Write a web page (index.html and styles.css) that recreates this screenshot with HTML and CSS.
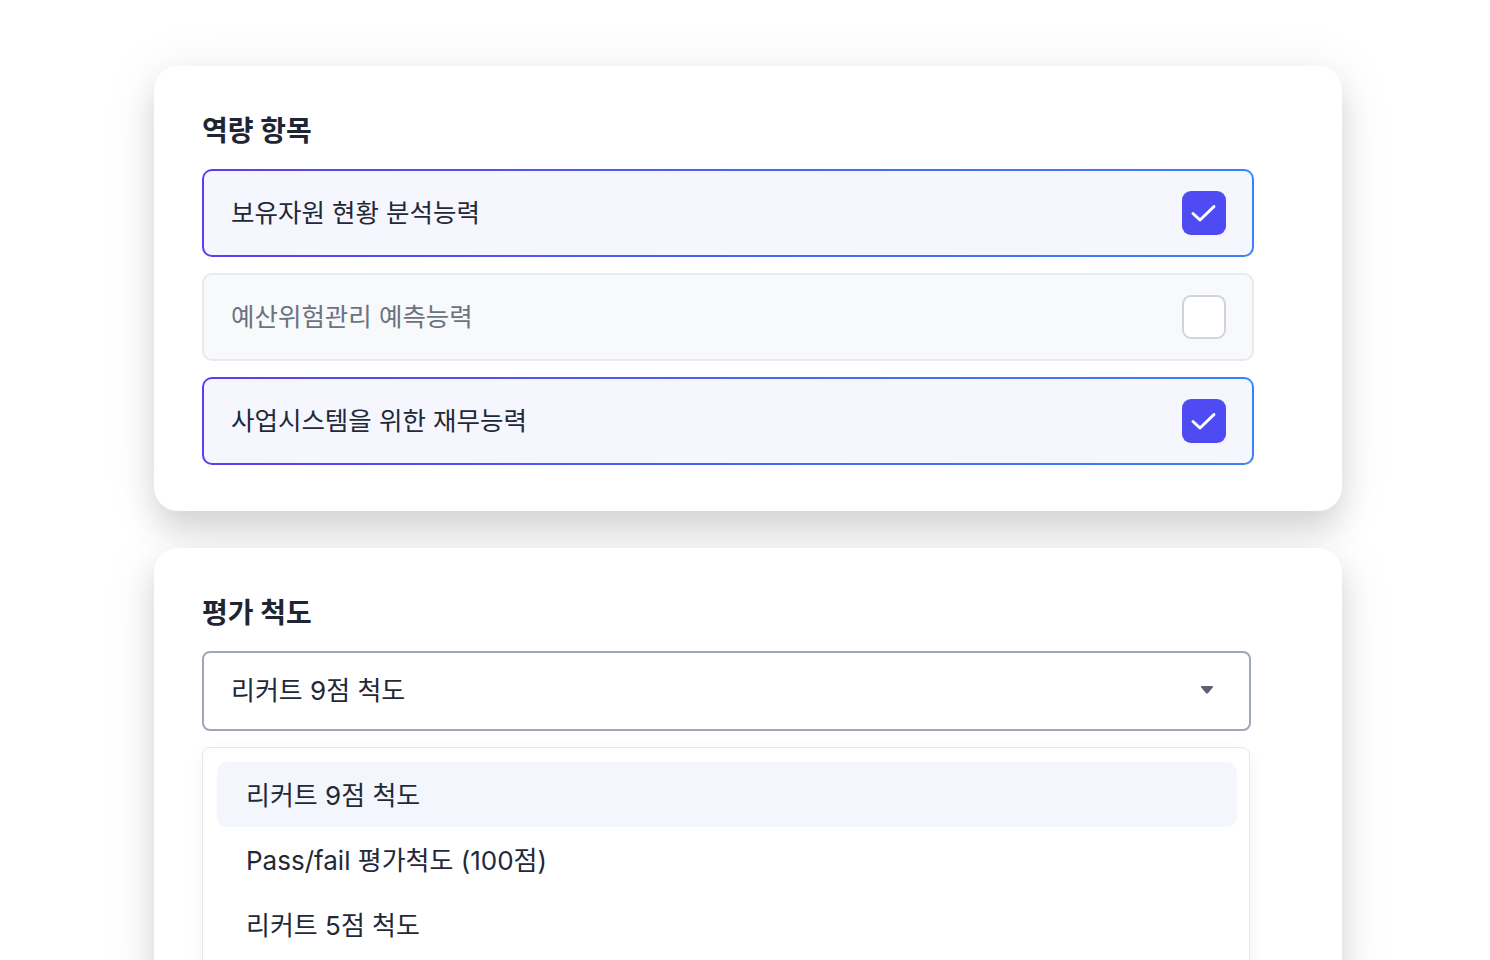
FILE: index.html
```html
<!DOCTYPE html>
<html lang="ko">
<head>
<meta charset="utf-8">
<link rel="stylesheet" href="styles.css">
</head>
<body>
<main class="page">
  <section class="card card-top">
    <h2 class="card-title">역량 항목</h2>
    <div class="items">
      <div class="item item-checked">
        <span class="item-label">보유자원 현황 분석능력</span>
        <span class="box box-checked">
          <svg width="44" height="44" viewBox="0 0 44 44"><polyline points="11,22.5 18,29 32,15.5" fill="none" stroke="#fff" stroke-width="3" stroke-linecap="round" stroke-linejoin="round"/></svg>
        </span>
      </div>
      <div class="item item-unchecked">
        <span class="item-label">예산위험관리 예측능력</span>
        <span class="box box-empty"></span>
      </div>
      <div class="item item-checked">
        <span class="item-label">사업시스템을 위한 재무능력</span>
        <span class="box box-checked">
          <svg width="44" height="44" viewBox="0 0 44 44"><polyline points="11,22.5 18,29 32,15.5" fill="none" stroke="#fff" stroke-width="3" stroke-linecap="round" stroke-linejoin="round"/></svg>
        </span>
      </div>
    </div>
  </section>

  <section class="card card-bottom">
    <h2 class="card-title">평가 척도</h2>
    <div class="select">
      <span class="select-value">리커트 9점 척도</span>
      <svg class="select-arrow" width="14" height="10" viewBox="0 0 14 10"><path d="M2 1 H12 Q13.6 1 12.7 2.4 L8.2 7.9 Q7 9.2 5.8 7.9 L1.3 2.4 Q0.4 1 2 1 Z" fill="#5b6170"/></svg>
    </div>
    <ul class="menu">
      <li class="option option-active">리커트 9점 척도</li>
      <li class="option">Pass/fail 평가척도 (100점)</li>
      <li class="option">리커트 5점 척도</li>
    </ul>
  </section>
</main>
</body>
</html>
```

FILE: styles.css
```css
html, body {
  margin: 0;
  padding: 0;
  background: #ffffff;
  font-family: Inter, "Noto Sans CJK KR", "Noto Sans", sans-serif;
  color: #1f2937;
  overflow: hidden;
}

.page {
  width: 1490px;
  height: 960px;
  box-sizing: border-box;
  padding: 66px 0 0 154px;
  display: flex;
  flex-direction: column;
  gap: 37px;
}

.card {
  width: 1188px;
  box-sizing: border-box;
  background: #ffffff;
  border-radius: 24px;
  padding: 48px 88px 46px 48px;
  box-shadow: 0 18px 30px rgba(0, 0, 0, 0.13), 0 4px 60px rgba(0, 0, 0, 0.07);
  flex-shrink: 0;
}

.card-bottom {
  padding-right: 91px;
  height: 460px;
}

.card-title {
  margin: 0 0 23px 0;
  font-size: 28px;
  line-height: 32px;
  font-weight: 700;
  color: #1f2533;
  position: relative;
  top: 1px;
}

.items {
  display: flex;
  flex-direction: column;
  gap: 16px;
}

.item {
  height: 88px;
  box-sizing: border-box;
  border-radius: 10px;
  display: flex;
  align-items: center;
  justify-content: space-between;
  padding: 0 26px 0 27px;
}

.item-checked {
  border: 2px solid transparent;
  background:
    linear-gradient(#f5f6fe, #f5f6fe) padding-box,
    linear-gradient(90deg, #5b3df2 0%, #4a63f4 50%, #3b82f6 100%) border-box;
}

.item-unchecked {
  border: 2px solid #e8eaef;
  background: #f8f9fb;
}

.item-label {
  font-size: 25.5px;
  line-height: 32px;
  color: #1f2937;
}

.item-unchecked .item-label {
  color: #6b7280;
}

.box {
  width: 44px;
  height: 44px;
  box-sizing: border-box;
  border-radius: 9px;
  display: block;
}

.box svg {
  display: block;
}

.box-checked {
  background: #4f4bf2;
}

.box-empty {
  background: #ffffff;
  border: 2px solid #d1d5db;
}

.select {
  height: 80px;
  box-sizing: border-box;
  border: 2px solid #9ea7b8;
  border-radius: 8px;
  display: flex;
  align-items: center;
  justify-content: space-between;
  padding: 0 35px 0 27px;
  background: #ffffff;
}

.select-value {
  font-size: 26px;
  line-height: 32px;
  color: #1f2937;
}

.select-arrow {
  display: block;
  margin-top: -2px;
}

.menu {
  list-style: none;
  margin: 16px 1px 0 0;
  padding: 14px 12px 14px 14px;
  border: 1px solid #e5e7eb;
  border-radius: 8px;
  background: #ffffff;
  box-shadow: 0 6px 20px rgba(0, 0, 0, 0.05);
}

.option {
  height: 65px;
  box-sizing: border-box;
  display: flex;
  align-items: center;
  padding: 0 29px 3px 29px;
  font-size: 26px;
  color: #1f2937;
  border-radius: 10px;
}

.option-active {
  background: #f3f6fc;
}
```
